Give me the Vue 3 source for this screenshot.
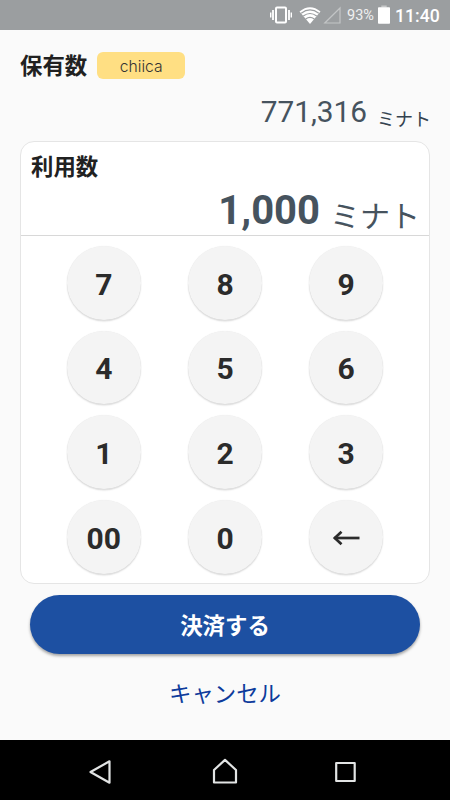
<script setup>
const keys = ['7', '8', '9', '4', '5', '6', '1', '2', '3', '00', '0', '←']
</script>

<template>
  <div class="screen">
    <header class="status">
      <svg class="status-icons" width="72" height="30" viewBox="0 0 72 30">
        <g fill="none" stroke="#fff">
          <rect x="6" y="7.5" width="10" height="15" rx="1" stroke-width="2" />
          <path d="M3 10v10M19 10v10" stroke-width="1.8" />
          <path d="M.7 12.5v5M21.3 12.5v5" stroke-width="1.4" />
        </g>
        <path d="M29.5 11.5Q40 3 50.5 11.5L40 24Z" fill="#fff" />
        <g fill="none" stroke="#9b9ea0" stroke-width="1.2">
          <path d="M31.2 13.2Q40 6.5 48.8 13.2" />
          <path d="M33.3 16Q40 11 46.7 16" />
          <path d="M35.7 18.9Q40 15.7 44.3 18.9" />
        </g>
        <path d="M54.8 23H70V8Z" fill="none" stroke="#c3c5c6" stroke-width="1.2" />
      </svg>
      <span class="percent">93%</span>
      <svg class="battery" width="12" height="30" viewBox="0 0 12 30">
        <path d="M3.3 5.5h5.4v2H3.3z" fill="#c6c8c9" />
        <rect y="7.3" width="12" height="16.4" rx=".8" fill="#fff" />
      </svg>
      <span class="clock">11:40</span>
    </header>

    <main class="content">
      <div class="owned">
        <h2 class="title">保有数</h2>
        <span class="tag">chiica</span>
      </div>
      <div class="balance">
        <span class="balance-num">771,316</span>
        <span class="balance-unit">ミナト</span>
      </div>

      <section class="card">
        <div class="entry">
          <h2 class="title">利用数</h2>
          <div class="amount">
            <span class="amount-num">1,000</span>
            <span class="amount-unit">ミナト</span>
          </div>
        </div>
        <div class="pad">
          <button v-for="k in keys" :key="k" class="key">
            <svg v-if="k === '←'" width="28" height="16" viewBox="0 0 28 16">
              <path d="M2.5 8H27.5" fill="none" stroke="#2b2b2b" stroke-width="2.7" />
              <path d="M9.5 1.7L2.8 8l6.700 6.300" fill="none" stroke="#2b2b2b" stroke-width="2.700" />
            </svg>
            <template v-else>{{ k }}</template>
          </button>
        </div>
      </section>

      <button class="pay">決済する</button>
      <button class="cancel">キャンセル</button>
    </main>

    <nav class="nav">
      <svg width="24" height="28" viewBox="0 0 24 28">
        <path d="M2.500 14L21.500 3.300V24.700Z" class="line" />
      </svg>
      <svg width="26" height="28" viewBox="0 0 26 28">
        <path d="M2 24.500V12L13 1.900L24 12V24.500Z" class="line" />
      </svg>
      <svg width="24" height="28" viewBox="0 0 24 28">
        <rect x="2.200" y="5" width="18.500" height="18" class="line" />
      </svg>
    </nav>
  </div>
</template>

<style>
body {
  background: #fafafa;
}
</style>

<style scoped>
.screen {
  width: 450px;
  height: 800px;
  display: flex;
  flex-direction: column;
  overflow: hidden;
  background: #fafafa;
  font-family: Roboto, 'Noto Sans CJK JP', sans-serif;
  color: #212121;
}
button {
  border: 0;
  padding: 0;
  font-family: inherit;
}
.status {
  height: 30px;
  flex: none;
  display: flex;
  align-items: center;
  justify-content: flex-end;
  box-sizing: border-box;
  padding-right: 10px;
  background: #9b9ea0;
  color: #fff;
}
.percent {
  width: 28px;
  margin: 1px 3px 0 5px;
  font-size: 14.5px;
  white-space: nowrap;
  color: #f0f0f0;
}
.clock {
  width: 45px;
  margin: 1px 0 0 5px;
  font-size: 17.600px;
  font-weight: 500;
  white-space: nowrap;
}
.content {
  height: 710px;
  display: flex;
  flex-direction: column;
  box-sizing: border-box;
  padding: 20px 20px 0;
}
.owned {
  display: flex;
  align-items: center;
  gap: 10px;
  height: 32px;
}
.title {
  margin: 0;
  padding-top: 1px;
  font-size: 22.4px;
  line-height: 31px;
  font-weight: 700;
}
.tag {
  width: 88px;
  height: 27px;
  margin-bottom: 2px;
  border-radius: 6px;
  background: #ffdf83;
  color: #333;
  font-family: Inter, sans-serif;
  font-size: 15.700px;
  font-weight: 300;
  line-height: 29px;
  text-align: center;
}
.balance,
.amount {
  display: flex;
  justify-content: flex-end;
  align-items: flex-start;
  color: #46535e;
}
.balance {
  height: 59px;
  line-height: 60px;
  gap: 10px;
  margin-right: -1px;
}
.balance-num {
  font-size: 29.800px;
}
.balance-unit {
  padding-top: 8px;
  font-size: 18px;
  color: #33424f;
}
.card {
  height: 443px;
  flex: none;
  box-sizing: border-box;
  border: 1px solid #e5e5e5;
  border-radius: 14px;
  background: #fff;
}
.entry {
  height: 94px;
  box-sizing: border-box;
  padding: 9px 9px 0 10px;
  border-bottom: 1px solid #d8d8d8;
}
.amount {
  height: 54px;
  line-height: 54px;
  gap: 10px;
}
.amount-num {
  padding-top: 1px;
  font-size: 40px;
  font-weight: 700;
}
.amount-unit {
  padding-top: 7px;
  font-size: 30px;
}
.pad {
  display: grid;
  grid-template-columns: repeat(3, 74px);
  grid-auto-rows: 73.500px;
  column-gap: 47.200px;
  row-gap: 11.200px;
  justify-content: center;
  padding-top: 10px;
}
.key {
  display: flex;
  align-items: center;
  justify-content: center;
  padding-top: 3px;
  border-radius: 50%;
  background: #f4f4f4;
  box-shadow: 0 1.500px 1.500px rgba(0, 0, 0, 0.13), 0 0 1px rgba(0, 0, 0, 0.1);
  color: #2b2b2b;
  font-size: 30px;
  font-weight: 700;
}
.pay {
  height: 59px;
  flex: none;
  margin: 11px 10px 0;
  padding-bottom: 2px;
  border-radius: 30px;
  background: #1d50a2;
  box-shadow: 0 2px 3px rgba(0, 0, 0, 0.35);
  color: #fff;
  font-size: 22.4px;
  font-weight: 700;
}
.cancel {
  height: 40px;
  margin-top: 18px;
  background: transparent;
  color: #0d3b9c;
  font-size: 22.4px;
}
.nav {
  height: 60px;
  flex: none;
  display: flex;
  align-items: center;
  justify-content: space-between;
  box-sizing: border-box;
  padding: 4px 92px 0 88px;
  background: #000;
}
.nav svg:nth-child(2) {
  margin-left: 4px;
}
.line {
  fill: none;
  stroke: #e2e4e4;
  stroke-width: 2.200;
  stroke-linejoin: round;
}
</style>
